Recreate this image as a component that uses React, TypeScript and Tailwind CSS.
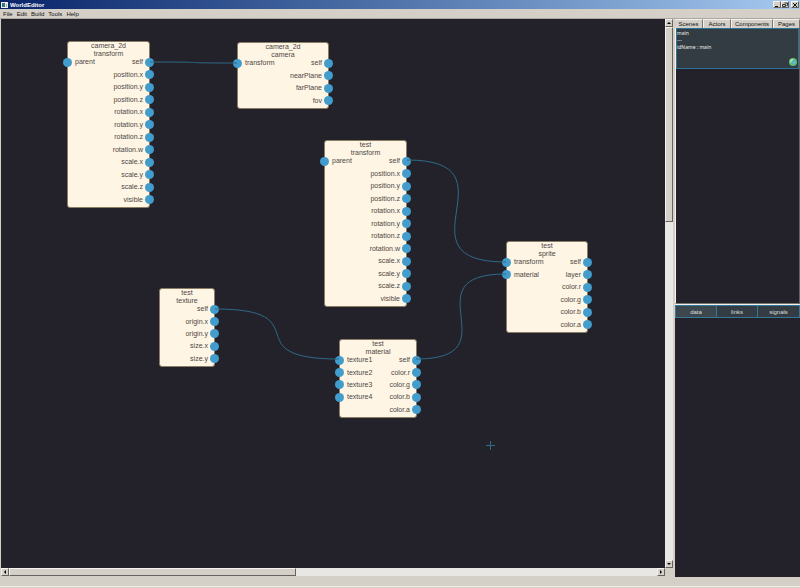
import React from 'react';

type GraphNode = {
  id: string;
  title: string;
  kind: string;
  place: string;
  inputs: string[];
  outputs: string[];
};

const transformOutputs = [
  'self',
  'position.x',
  'position.y',
  'position.z',
  'rotation.x',
  'rotation.y',
  'rotation.z',
  'rotation.w',
  'scale.x',
  'scale.y',
  'scale.z',
  'visible',
];

const nodes: GraphNode[] = [
  { id: 'n1', title: 'camera_2d', kind: 'transform', place: 'left-[66px] top-[22px] w-[83px] h-[167px]', inputs: ['parent'], outputs: transformOutputs },
  { id: 'n2', title: 'camera_2d', kind: 'camera', place: 'left-[236px] top-[23px] w-[92px] h-[67px]', inputs: ['transform'], outputs: ['self', 'nearPlane', 'farPlane', 'fov'] },
  { id: 'n3', title: 'test', kind: 'transform', place: 'left-[323px] top-[121px] w-[83px] h-[167px]', inputs: ['parent'], outputs: transformOutputs },
  { id: 'n4', title: 'test', kind: 'sprite', place: 'left-[505px] top-[222px] w-[82px] h-[92px]', inputs: ['transform', 'material'], outputs: ['self', 'layer', 'color.r', 'color.g', 'color.b', 'color.a'] },
  { id: 'n5', title: 'test', kind: 'texture', place: 'left-[158px] top-[269px] w-[56px] h-[79px]', inputs: [], outputs: ['self', 'origin.x', 'origin.y', 'size.x', 'size.y'] },
  { id: 'n6', title: 'test', kind: 'material', place: 'left-[338px] top-[320px] w-[78px] h-[79px]', inputs: ['texture1', 'texture2', 'texture3', 'texture4'], outputs: ['self', 'color.r', 'color.g', 'color.b', 'color.a'] },
];

const links = [
  [149, 43, 236, 44],
  [406, 141, 505, 243],
  [214, 290, 338, 340],
  [415, 340, 505, 255],
];

function linkPath([x1, y1, x2, y2]: number[]) {
  const reach = Math.hypot(x2 - x1, y2 - y1) * 0.8;
  return `M${x1} ${y1} C${x1 + reach} ${y1} ${x2 - reach} ${y2} ${x2} ${y2}`;
}

function Port() {
  return <span className="size-[9px] shrink-0 rounded-full bg-[#429dcd]" />;
}

function NodeCard({ node }: { node: GraphNode }) {
  return (
    <section
      className={`absolute flex flex-col rounded-[3px] border border-[#8b7c64] bg-[#fff5e4] pb-px text-[7px] leading-[8px] text-[#4b4744] ${node.place}`}
    >
      <header className="h-[14px] shrink-0 text-center">
        <h2>{node.title}</h2>
        <p>{node.kind}</p>
      </header>
      <div className="grid min-h-0 flex-1 auto-rows-fr">
        {node.outputs.map((output, i) => (
          <div key={output} className="-mx-[5px] flex items-center justify-between">
            <div className="flex items-center gap-[3px]">
              {node.inputs[i] && (
                <>
                  <Port />
                  <span>{node.inputs[i]}</span>
                </>
              )}
            </div>
            <div className="flex items-center gap-[2px]">
              <span>{output}</span>
              <Port />
            </div>
          </div>
        ))}
      </div>
    </section>
  );
}

const bevel = 'border border-t-[#f4f2ee] border-l-[#f4f2ee] border-r-[#66635f] border-b-[#66635f] bg-[#d4d0c8]';

function ArrowButton({ label, path }: { label: string; path: string }) {
  return (
    <button aria-label={label} className={`flex size-[8px] shrink-0 items-center justify-center ${bevel}`}>
      <svg viewBox="0 0 6 6" className="size-[6px] shrink-0">
        <path d={path} fill="#000" />
      </svg>
    </button>
  );
}

function WindowButton({ label, children }: { label: string; children: React.ReactNode }) {
  return (
    <button aria-label={label} className={`flex h-[7px] w-[8px] items-center justify-center ${bevel}`}>
      <svg viewBox="0 0 6 6" className="size-[6px] shrink-0" fill="none" stroke="#111">
        {children}
      </svg>
    </button>
  );
}

function Globe() {
  return (
    <svg viewBox="0 0 8 8" className="size-[8px]">
      <circle cx="4" cy="4" r="4" fill="#62bd72" />
      <circle cx="4.300" cy="4" r="2.400" fill="#52b0c4" />
      <path d="M.8 3.500 2 1.200 4.400 .8 3.800 2.400 2.400 3.200 2.200 5.200z" fill="#b4eab0" />
      <path d="M4.400 4.200 5.600 3.600 5.800 5 4.800 5.800z" fill="#86dca0" />
    </svg>
  );
}

const sceneTabs = [
  { label: 'Scenes', width: 'w-[28px]' },
  { label: 'Actors', width: 'w-[28px]' },
  { label: 'Components', width: 'w-[42px]' },
  { label: 'Pages', width: 'flex-1' },
];

export default function App() {
  return (
    <div className="flex h-screen w-full flex-col overflow-hidden bg-[#d4d0c8] font-['Liberation_Sans',sans-serif] text-[6px] leading-[8px] text-[#111]">
      <header className="flex h-[9px] shrink-0 items-center justify-between bg-linear-to-r from-[#0a246a] to-[#a6caf0] px-px">
        <div className="flex items-center gap-[2px]">
          <svg viewBox="0 0 7 6" className="h-[6px] w-[7px]">
            <rect width="7" height="6" fill="#e8eef0" />
            <rect x="1" y="1" width="3" height="4" fill="#397b73" />
            <rect x="5" y="2" width="1" height="3" fill="#9aa5ad" />
          </svg>
          <h1 className="font-bold text-white">WorldEditor</h1>
        </div>
        <div className="flex">
          <WindowButton label="Minimize"><path d="M1 4.500h3" /></WindowButton>
          <WindowButton label="Restore"><path d="M2.500 1h3v2.500h-1M.5 2.500h3v2h-3z" strokeWidth=".8" /></WindowButton>
          <span className="w-[2px]" />
          <WindowButton label="Close"><path d="m1 1 4 4M5 1 1 5" /></WindowButton>
        </div>
      </header>

      <nav className="flex h-[10px] shrink-0 items-center gap-1 border-b border-[#aaa69f] px-[3px]">
        {['File', 'Edit', 'Build', 'Tools', 'Help'].map((item) => (
          <button key={item}>{item}</button>
        ))}
      </nav>

      <div className="flex min-h-0 flex-1">
        <div className="mb-[12px] ml-px mr-[2px] flex min-w-0 flex-1 flex-col">
          <div className="flex min-h-0 flex-1">
            <main className="relative min-w-0 flex-1 overflow-hidden bg-[#23222b]">
              {nodes.map((node) => (
                <NodeCard key={node.id} node={node} />
              ))}
              <svg className="pointer-events-none absolute inset-0 size-full" fill="none" stroke="#2f6a87">
                {links.map((link) => (
                  <path key={link.join()} d={linkPath(link)} />
                ))}
                <path d="M485 426.500h9M489.500 422v9" />
              </svg>
            </main>
            <div className="flex w-[8px] flex-col bg-[#e9e7e3]">
              <ArrowButton label="Scroll up" path="M1 4h4L3 2z" />
              <div className={`grow-194 ${bevel}`} />
              <div className="grow-341" />
              <ArrowButton label="Scroll down" path="M1 2h4L3 4z" />
            </div>
          </div>
          <div className="mr-[8px] flex h-[8px] shrink-0 bg-[#e9e7e3]">
            <ArrowButton label="Scroll left" path="M4 1v4L2 3z" />
            <div className={`grow-287 ${bevel}`} />
            <div className="grow-363" />
            <ArrowButton label="Scroll right" path="M2 1v4L4 3z" />
          </div>
        </div>

        <aside className="mb-[11px] flex w-[125px] shrink-0 flex-col">
          <div role="tablist" className="flex h-[9px] shrink-0">
            {sceneTabs.map((tab, i) => (
              <button
                key={tab.label}
                role="tab"
                aria-selected={i === 0}
                className={`flex items-center justify-center border-t border-r border-t-[#f4f2ee] border-r-[#77736d] ${tab.width} ${i === 0 ? '' : 'border-l border-l-[#f4f2ee]'}`}
              >
                {tab.label}
              </button>
            ))}
          </div>
          <div className="min-h-0 flex-[276] border-b border-l border-r border-b-[#77736d] border-l-[#f4f2ee] border-r-[#66635f] bg-[#23222b]">
            <div className="flex h-[41px] items-end justify-between border border-[#2d7397] bg-[#333c42] pr-px text-[5px] leading-[7px] text-[#f0f0ea]">
              <div className="self-start pt-px font-['Noto_Sans',sans-serif]">
                <p>main</p>
                <p>---</p>
                <p>idName : main</p>
              </div>
              <div className="pb-[2px]"><Globe /></div>
            </div>
          </div>
          <div className="flex min-h-0 flex-[273] flex-col border-t border-[#f4f2ee] bg-[#23222b]">
            <div role="tablist" className="grid h-[13px] shrink-0 grid-cols-3 divide-x divide-[#357797] border border-[#357797] bg-[#333c42] text-[#dedfda]">
              {['data', 'links', 'signals'].map((tab, i) => (
                <button key={tab} role="tab" aria-selected={i === 0} className={i === 0 ? 'bg-[#3d484e]' : ''}>
                  {tab}
                </button>
              ))}
            </div>
          </div>
        </aside>
      </div>
      <footer className="mt-[-2px] mb-px h-px shrink-0 bg-[#efede9]" />
    </div>
  );
}
